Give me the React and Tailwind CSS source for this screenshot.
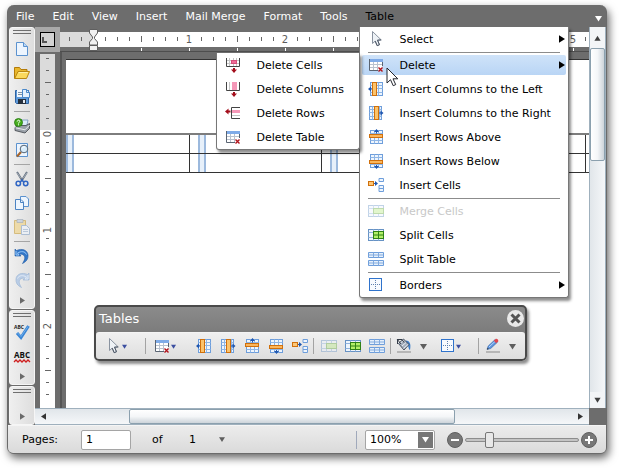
import { useState } from 'react';

function Svg({ children, className = 'w-4 h-4', box = '0 0 16 16' }) {
  return (
    <svg viewBox={box} className={`shrink-0 ${className}`} fill="none" aria-hidden="true">
      {children}
    </svg>
  );
}

function Caret({ dir = 'right', color = '#000', className = 'w-[6px] h-[8px]' }) {
  const points = {
    right: '0,0 7,4.5 0,9',
    left: '7,0 0,4.5 7,9',
    down: '0,2 7,2 3.5,7.5',
    up: '0,7.5 7,7.5 3.5,2',
  };
  return (
    <Svg box="0 0 7 9" className={className}>
      <polygon points={points[dir]} fill={color} />
    </Svg>
  );
}

/* ---------- table icons ---------- */

const CursorIcon = () => (
  <Svg>
    <path d="M4.5 .5v12l2.700-2.400 2 4.600 2.300-1-2-4.500 3.700-.3z" fill="#eef2f6" stroke="#8a93a0" />
    <path d="M7.200 10.100l2 4.600 2.300-1-2-4.500 3.700-.3" stroke="#4d5766" />
  </Svg>
);

const DeleteTableIcon = () => (
  <Svg>
    <path d="M2 5h12v8H2z" fill="#fff" />
    <rect x="1" y="2" width="14" height="3" fill="#7fabe8" />
    <path d="M1 7.500h13M1 10.500h9M5.500 5v8M9.500 5v8" stroke="#b9c2cf" />
    <path d="M1.500 2v11.500H10M14.500 5v4" stroke="#5a6472" />
    <path d="M10.500 10.500l4 4M14.500 10.500l-4 4" stroke="#b0131b" strokeWidth="1.4" />
  </Svg>
);

const DeleteCellsIcon = () => (
  <Svg>
    <path d="M4.500 1v8M8.500 1v8M11.500 1v8M2 3.500h12M2 6.500h12" stroke="#c5c5c5" />
    <rect x="6.500" y="3.500" width="5" height="3" fill="#f06c98" stroke="#d4507a" />
    <path d="M1.500 1v8.500h13V1" stroke="#444" />
    <path d="M9 11v3" stroke="#a30d1b" strokeWidth="2" />
    <path d="M6 12.500h6L9 16z" fill="#a30d1b" />
  </Svg>
);

const DeleteColumnsIcon = () => (
  <Svg>
    <path d="M4.500 1v8" stroke="#c5c5c5" />
    <rect x="7" y="1" width="5" height="8" fill="#f598b8" />
    <path d="M1.500 1v8.500h13V1" stroke="#444" />
    <path d="M9 11v3" stroke="#a30d1b" strokeWidth="2" />
    <path d="M6 12.500h6L9 16z" fill="#a30d1b" />
  </Svg>
);

const DeleteRowsIcon = () => (
  <Svg>
    <path d="M7 10.500h8" stroke="#c5c5c5" />
    <rect x="7" y="5" width="8" height="3" fill="#f598b8" />
    <path d="M15 2.500H6.500v11H15" stroke="#444" />
    <path d="M3 6.500h2.500" stroke="#a30d1b" strokeWidth="2" />
    <path d="M3.500 3.500v6L0 6.500z" fill="#a30d1b" />
  </Svg>
);

const BlueGrid = () => (
  <>
    <rect x="2.500" y="1.500" width="12" height="13" fill="#eef5fd" stroke="#6e9edb" />
    <path d="M2.500 4.500h12M2.500 7.500h12M2.500 11.500h12M6.500 1.500v13M10.500 1.500v13" stroke="#8fb6e6" />
  </>
);

const InsertLeftIcon = () => (
  <Svg>
    <BlueGrid />
    <rect x="4.500" y="1.500" width="4" height="13" fill="#fbc36c" stroke="#d0700c" />
    <path d="M4 8H2" stroke="#1f57b0" />
    <path d="M3 5.500v5L0 8z" fill="#1f57b0" />
  </Svg>
);

const InsertRightIcon = () => (
  <Svg>
    <rect x="1.500" y="1.500" width="12" height="13" fill="#eef5fd" stroke="#6e9edb" />
    <path d="M1.500 4.500h12M1.500 7.500h12M1.500 11.500h12M4.500 1.500v13M11.500 1.500v13" stroke="#8fb6e6" />
    <rect x="6.500" y="1.500" width="4" height="13" fill="#fbc36c" stroke="#d0700c" />
    <path d="M11 8h3" stroke="#1f57b0" />
    <path d="M12.500 5.500v5L15.500 8z" fill="#1f57b0" />
  </Svg>
);

const InsertAboveIcon = () => (
  <Svg>
    <BlueGrid />
    <rect x="1.500" y="5.500" width="13" height="3" fill="#fbb65c" stroke="#d0700c" />
    <path d="M8.500 4.500V2" stroke="#1f57b0" />
    <path d="M6 3h5L8.500 0z" fill="#1f57b0" />
  </Svg>
);

const InsertBelowIcon = () => (
  <Svg>
    <BlueGrid />
    <rect x="1.500" y="7.500" width="13" height="3" fill="#fbb65c" stroke="#d0700c" />
    <path d="M8.500 12v2" stroke="#1f57b0" />
    <path d="M6 13h5l-2.500 3z" fill="#1f57b0" />
  </Svg>
);

const InsertCellsIcon = () => (
  <Svg>
    <rect x=".5" y="4.500" width="5" height="4" fill="#fcc778" stroke="#d0700c" />
    <path d="M6 6.500h3" stroke="#1f57b0" />
    <path d="M7 4l3 2.500L7 9z" fill="#1f57b0" />
    <path d="M11 1.500h4.500v3H11zM11 8.500h4.500v3H11zM11 11.500h4.500v3H11z" fill="#eef5fd" stroke="#6e9edb" />
  </Svg>
);

const MergeCellsIcon = () => (
  <Svg className="w-4 h-4 opacity-40">
    <rect x=".5" y="2.500" width="15" height="11" fill="#eef5fd" stroke="#6792c4" />
    <path d="M.5 5.500h15M.5 10.500h15M5.500 2.500v11M10.500 2.500v11" stroke="#8fb2dd" />
    <rect x="5.500" y="5.500" width="10" height="5" fill="#b9ea84" stroke="#5fa536" />
  </Svg>
);

const SplitCellsIcon = () => (
  <Svg>
    <rect x=".5" y="2.500" width="15" height="11" fill="#eef5fd" stroke="#6792c4" />
    <path d="M.5 5.500h15M.5 10.500h15M5.500 2.500v11M10.500 2.500v11" stroke="#8fb2dd" />
    <rect x="5.500" y="4.500" width="10" height="7" fill="#b2ef68" stroke="#2f8216" />
    <path d="M5.500 8h10M10.500 4.500v7" stroke="#2f8216" />
  </Svg>
);

const SplitTableIcon = () => (
  <Svg>
    <path d="M.5 1.500h15v5H.5zM.5 9.500h15v5H.5z" fill="#e6f0fb" stroke="#6e9edb" />
    <path d="M.5 4h15M.5 12h15M5.500 1.500v5M10.500 1.500v5M5.500 9.500v5M10.500 9.500v5" stroke="#82abdf" />
  </Svg>
);

const BordersIcon = () => (
  <Svg>
    <rect x="1.500" y="1.500" width="12" height="12" fill="#f7fafe" stroke="#2f73cc" />
    <path d="M7.500 3v10M3 7.500h10" stroke="#5d7fae" strokeDasharray="1 1" />
  </Svg>
);

const BucketIcon = () => (
  <Svg>
    <path d="M10 2.500c3 .2 5.500 2.500 4 9.500-2-1-1-5-4-7z" fill="#3c7fcb" />
    <path d="M2.500 5.500L7.500 1l5.500 5.500-5 5.500z" fill="#a4afbd" stroke="#4b5563" />
    <path d="M4 5.500L7.700 2.300M6 8l4-3.500M7.500 10.500l4.500-4" stroke="#e8edf3" />
    <path d="M1 1l4 5M1 1.500h5l2 3M1.500 1v5" stroke="#333b47" />
    <rect x="1" y="13" width="14" height="2" fill="#b6b6b6" />
  </Svg>
);

const PencilIcon = () => (
  <Svg>
    <path d="M2 11.500l1.200-3.500 7-6.500 2.500 2.500-7 6.500z" fill="#5b93dd" stroke="#3465a8" strokeWidth=".6" />
    <path d="M4 9l6.500-6" stroke="#b8d6fb" />
    <path d="M8.800 2.800L10.700 1c1.200-.6 3 1 2.500 2.300l-2 2z" fill="#e2474d" />
    <path d="M2 11.500l.6-1.800 1.300 1.200z" fill="#333" />
    <rect x="1" y="13" width="14" height="2" fill="#b6b6b6" />
  </Svg>
);

/* ---------- main toolbar icons ---------- */

const NewIcon = () => (
  <Svg>
    <path d="M2.500 1.500h7l4 4v9h-11z" fill="#edf5fe" stroke="#5b92cf" />
    <path d="M9.500 1.500v4h4" fill="#bcd8f5" stroke="#5b92cf" />
  </Svg>
);

const OpenIcon = () => (
  <Svg>
    <path d="M.5 13.500v-11h5l1.500 2h6v3" fill="#e9b72c" stroke="#b37b0a" />
    <path d="M.7 13.500L4 6.500h11.500l-3 7z" fill="#fbd95c" stroke="#b98611" />
    <path d="M4.800 7.500h9" stroke="#fff1a8" />
  </Svg>
);

const SaveIcon = () => (
  <Svg>
    <path d="M1.500 1.500h13v13h-12l-1-1z" fill="#5f9ad9" stroke="#2d62a3" />
    <rect x="4" y="10" width="8" height="5" fill="#26303d" />
    <rect x="9" y="11" width="2" height="3" fill="#e5eaf0" />
    <rect x="3" y="1" width="6" height="7" fill="#f4f8fc" />
    <path d="M4 3.500h4M4 5.500h4" stroke="#7d92a8" />
    <path d="M8.500.5h4l3 3v5h-7z" fill="#e5f1fd" stroke="#4b88c9" />
    <path d="M12.500.5v3h3" stroke="#4b88c9" />
  </Svg>
);

const PrintIcon = () => (
  <Svg>
    <path d="M7 2h7l-1.500 7H5z" fill="#dcebfa" stroke="#6f93b8" strokeWidth=".8" />
    <path d="M1 9.500l3-2h8l3.500-2v5L11 15 1 12.500z" fill="#9aa1a9" stroke="#3d4349" strokeWidth=".8" />
    <path d="M1.500 9.800l9.500 2 4.500-4.600" stroke="#e8ebee" />
    <circle cx="4.500" cy="4.500" r="4" fill="#46ad1c" stroke="#20750b" strokeWidth=".8" />
    <path d="M3.200 3.500C3.500 1.500 6.300 2 5.700 3.800c-.3.700-1.200.7-1.200 1.700M4.500 6.300v1" stroke="#fff" />
  </Svg>
);

const PreviewIcon = () => (
  <Svg>
    <path d="M2.500 1.500h11v13h-11z" fill="#edf5fe" stroke="#5b92cf" />
    <path d="M7 10l-4 4.500" stroke="#a5652d" strokeWidth="2.200" />
    <circle cx="10" cy="7" r="3.800" fill="#d7ecfb" stroke="#566575" />
    <path d="M8 6.500c.4-1.500 2-1.900 3-1.400" stroke="#fff" />
  </Svg>
);

const CutIcon = () => (
  <Svg>
    <path d="M3 1l5.500 9M13 1l-5.500 9" stroke="#626e7d" strokeWidth="1.900" />
    <path d="M3 1.500l4 6M13 1.500L9 7.500" stroke="#cdd5de" strokeWidth=".6" />
    <circle cx="4.300" cy="12.500" r="2.200" stroke="#2f65c4" strokeWidth="1.500" />
    <circle cx="11.700" cy="12.500" r="2.200" stroke="#2f65c4" strokeWidth="1.500" />
    <path d="M6 11.500l2-2.500 2 2.500" stroke="#2f65c4" strokeWidth="1.500" />
  </Svg>
);

const CopyIcon = () => (
  <Svg>
    <path d="M6.500 1.500h5.500l2.500 2.500v7.500h-8z" fill="#edf5fe" stroke="#5b92cf" />
    <path d="M1.500 4.500H7L9.500 7v7.500h-8z" fill="#edf5fe" stroke="#4b83c3" />
    <path d="M6.500 4.500v3h3" stroke="#4b83c3" />
  </Svg>
);

const PasteIcon = () => (
  <Svg className="w-4 h-4 opacity-70">
    <path d="M.5 1.500h11v13H.5z" fill="#f0d58e" stroke="#cda94f" />
    <path d="M3 .5h6v3H3z" fill="#c3ccd8" stroke="#8b99aa" strokeWidth=".7" />
    <path d="M7.500 6.500h5l3 3v6h-8z" fill="#eef4fb" stroke="#96aecb" />
    <path d="M9 10.500h5M9 12.500h5" stroke="#a9bdd6" />
  </Svg>
);

const UndoIcon = () => (
  <Svg>
    <path d="M1 1l1.500 1.500C8 0 13.500 2 14 7c.3 4-1.500 6.500-5.500 8.500C11 12 11.300 9 10 7.500 8.800 6 7 6 5.500 6.300L7 8H1z" fill="#3378c9" stroke="#1c57a3" strokeWidth=".6" />
    <path d="M2 3v4h3L3.500 5C7 3 11 3 12.500 6.500" stroke="#9ccafa" />
  </Svg>
);

const RedoIcon = () => (
  <Svg>
    <path d="M15 1l-1.500 1.500C8 0 2.500 2 2 7c-.3 4 1.500 6.500 5.500 8.500C5 12 4.700 9 6 7.500 7.200 6 9 6 10.500 6.300L9 8h6z" fill="#bacde6" stroke="#9fb7d6" strokeWidth=".7" />
    <path d="M14 3v4h-3l1.500-2C9 3 5 3 3.500 6.500" stroke="#e0eaf6" />
  </Svg>
);

const SpellIcon = () => (
  <Svg className="h-4 w-4 overflow-visible">
    <text x="0" y="5" fontSize="5" fontWeight="bold" fontFamily="Open Sans, sans-serif" fill="#222">ABC</text>
    <path d="M3 9l4 4.500L14.500 2" stroke="#3a86d6" strokeWidth="3" />
    <path d="M3.500 9L7 12.500 14 2.500" stroke="#7db7ee" strokeWidth=".8" />
  </Svg>
);

const SpellLiveIcon = () => (
  <Svg className="h-4 w-4 overflow-visible">
    <text x="8" y="10" fontSize="8" fontWeight="bold" textAnchor="middle" fontFamily="Open Sans, sans-serif" fill="#111">ABC</text>
    <path d="M0 14l2-2 2 2 2-2 2 2 2-2 2 2 2-2 2 2" stroke="#cf1f1f" strokeWidth="1.300" />
  </Svg>
);

/* ---------- menus ---------- */

const menuNames = ['File', 'Edit', 'View', 'Insert', 'Mail Merge', 'Format', 'Tools'];

const deleteItems = [
  { label: 'Delete Cells', icon: DeleteCellsIcon },
  { label: 'Delete Columns', icon: DeleteColumnsIcon },
  { label: 'Delete Rows', icon: DeleteRowsIcon },
  { label: 'Delete Table', icon: DeleteTableIcon },
];

const tableItems = [
  { label: 'Select', icon: CursorIcon, arrow: true },
  null,
  { label: 'Delete', icon: DeleteTableIcon, arrow: true, items: deleteItems },
  { label: 'Insert Columns to the Left', icon: InsertLeftIcon },
  { label: 'Insert Columns to the Right', icon: InsertRightIcon },
  { label: 'Insert Rows Above', icon: InsertAboveIcon },
  { label: 'Insert Rows Below', icon: InsertBelowIcon },
  { label: 'Insert Cells', icon: InsertCellsIcon },
  null,
  { label: 'Merge Cells', icon: MergeCellsIcon, disabled: true },
  { label: 'Split Cells', icon: SplitCellsIcon },
  { label: 'Split Table', icon: SplitTableIcon },
  null,
  { label: 'Borders', icon: BordersIcon, arrow: true },
];

function MenuList({ items, className }) {
  return (
    <ul className={`absolute rounded-b-[3px] border border-t-0 border-[#777] bg-white text-black shadow-[2px_3px_3px_rgba(0,0,0,0.45)] ${className}`}>
      {items.map((item, i) => {
        if (!item) {
          return (
            <li key={i} className="flex h-0.5 items-end px-2">
              <hr className="w-full border-[#8c8c8c]" />
            </li>
          );
        }
        const Icon = item.icon;
        return (
          <li key={item.label} className="relative h-6 px-0.5 py-[2px]">
            <button
              type="button"
              disabled={item.disabled}
              className={`flex h-full w-full items-center rounded-[2px] pl-[6px] pr-px text-left whitespace-nowrap disabled:text-[#c8c8c8] ${
                item.items ? 'bg-linear-to-b from-[#cfe3f9] to-[#b9d5f5]' : ''
              }`}
            >
              <Icon />
              <span className="ml-[15px] flex-1 pt-px">{item.label}</span>
              {item.arrow && <Caret />}
            </button>
            {item.items && (
              <>
                <MenuList items={item.items} className="right-full top-0 w-36 border-t" />
                <Svg box="0 0 13 20" className="absolute left-[26px] top-[14px] h-5 w-[13px]">
                  <path d="M1 1v15l3.500-3.300 2.700 6 2.500-1.100L7 11.800h4.800z" fill="#fff" stroke="#23262e" />
                </Svg>
              </>
            )}
          </li>
        );
      })}
    </ul>
  );
}

function MenuBar() {
  return (
    <nav className="relative z-20 flex h-[22px] shrink-0 items-center gap-[18px] pl-2 pr-1 pt-px text-white">
      {menuNames.map((name) => (
        <button key={name} type="button" className="whitespace-nowrap">{name}</button>
      ))}
      <div className="relative h-full">
        <button type="button" className="h-full text-black">Table</button>
        <MenuList items={tableItems} className="-left-1.5 top-full w-[210px]" />
      </div>
      <button type="button" aria-label="More" className="ml-auto pt-1">
        <Caret dir="down" color="#fff" className="h-[9px] w-[7px]" />
      </button>
    </nav>
  );
}

/* ---------- side toolbar ---------- */

const sideGroups = [
  [
    ['New', NewIcon], ['Open', OpenIcon], ['Save', SaveIcon], null,
    ['Print', PrintIcon], ['Preview', PreviewIcon], null,
    ['Cut', CutIcon], ['Copy', CopyIcon], ['Paste', PasteIcon], null,
    ['Undo', UndoIcon], ['Redo', RedoIcon],
  ],
  [['Spelling', SpellIcon], ['Spell as you type', SpellLiveIcon]],
  [],
];

function SideToolbar() {
  return (
    <aside className="flex w-[26px] shrink-0 flex-col gap-px">
      {sideGroups.map((group, g) => (
        <div
          key={g}
          className="flex flex-col items-center rounded-[3px] border border-[#f6f6f6] bg-linear-to-r from-[#efefef] to-[#dedede] last:flex-1"
        >
          <div className="mt-[2px] mb-[3px] h-[4px] w-[18px] border-y border-[#6f6f6f]" />
          {group.map((item, i) => {
            if (!item) return <hr key={i} className="my-[2px] w-4 border-[#a5a5a5]" />;
            const [label, Icon] = item;
            return (
              <button key={label} type="button" aria-label={label} className="flex h-6 w-6 items-center justify-center">
                <Icon />
              </button>
            );
          })}
          <button type="button" aria-label="More tools" className="mt-auto flex h-4 w-6 items-center justify-center">
            <Caret color="#6a6a6a" className="h-[7px] w-[5px]" />
          </button>
        </div>
      ))}
    </aside>
  );
}

/* ---------- rulers ---------- */

const INCH = 96;
const range = (count) => Array.from({ length: count }, (_, i) => i + 1);
const topMarks = range(41);
const sideMarks = range(22);

function TopRuler() {
  return (
    <div className="h-[25px] min-w-0 flex-1 overflow-hidden border-b border-[#4e4e4e]">
      <svg width="1600" height="25" className="max-w-none" aria-hidden="true">
        <rect x="0" y="5" width="1600" height="15" fill="#fff" />
        <rect x="0" y="5" width="33" height="15" fill="#dbdbdb" />
        <path d="M9.500 10v4M21.500 10v4" stroke="#666" />
        {topMarks.map((n) => {
          const x = 33 + (n * INCH) / 8;
          if (n % 8 === 0) {
            return <text key={n} x={x} y="16" fontSize="10" textAnchor="middle" fill="#5c5c5c">{n / 8}</text>;
          }
          const tall = n % 4 === 0;
          return <path key={n} d={`M${x + 0.5} ${tall ? 9 : 10}v${tall ? 6 : 4}`} stroke="#666" />;
        })}
        {topMarks.filter((n) => n % 4 === 0).map((n) => (
          <path key={n} d={`M${33.5 + n * 12} 21v3`} stroke="#fff" />
        ))}
        <path d="M29.500 2.500h8v3.500L34.500 10v1.500l3 3.500v3h-8v-3l3-3.500V10l-3-4zM29.500 18.500h8v5h-8z" fill="#f1f1f1" stroke="#5f5f5f" />
      </svg>
    </div>
  );
}

function SideRuler() {
  return (
    <div className="w-[25px] shrink-0 overflow-hidden pl-[5px] pt-[2px]">
      <svg width="15" height="1600" className="max-w-none" aria-hidden="true">
        <rect width="15" height="1600" fill="#fff" />
        <rect width="15" height="76" fill="#dbdbdb" />
        {[4, 16, 28, 40, 52, 64].map((y) => (
          <path key={y} d={y === 28 ? 'M5 28.500h6' : `M6 ${y + 0.5}h3`} stroke="#666" />
        ))}
        <text transform="translate(11 80) rotate(-90)" fontSize="10" textAnchor="middle" fill="#5c5c5c">0</text>
        {sideMarks.map((n) => {
          const y = 76 + n * 12;
          if (n % 8 === 0) {
            return (
              <text key={n} transform={`translate(11 ${y + 4}) rotate(-90)`} fontSize="10" textAnchor="middle" fill="#5c5c5c">
                {n / 8}
              </text>
            );
          }
          return <path key={n} d={n % 4 === 0 ? `M5 ${y + 0.5}h6` : `M6 ${y + 0.5}h3`} stroke="#666" />;
        })}
      </svg>
    </div>
  );
}

/* ---------- document ---------- */

function DocumentTable() {
  return (
    <div className="overflow-hidden pt-[73px]">
      <table className="-ml-[9px] w-[661px] max-w-none table-fixed border-collapse border-t-2 border-[#7d7d7d]">
        <tbody>
          {[0, 1].map((r) => (
            <tr key={r}>
              {[0, 1, 2, 3, 4].map((c) => (
                <td key={c} className={`h-[19px] border border-[#333] p-0 pl-2 ${r === 0 ? 'border-t-0' : ''}`}>
                  <div className="h-[18px] w-2 border-x-2 border-[#9cb9dd] bg-[#e7f0fa]" />
                </td>
              ))}
            </tr>
          ))}
        </tbody>
      </table>
    </div>
  );
}

function ToolButton({ label, icon: Icon, caret, className = 'w-6 justify-center' }) {
  return (
    <button type="button" aria-label={label} className={`flex h-6 shrink-0 items-center ${className}`}>
      <Icon />
      {caret === 'small' && <Caret dir="down" color="#3c4fa0" className="h-[7px] w-[5px]" />}
      {caret === 'big' && <Caret dir="down" color="#5e5e5e" className="h-[9px] w-[7px]" />}
    </button>
  );
}

const Divider = ({ className = '' }) => <div className={`h-4 w-px shrink-0 bg-[#a3a3a3] ${className}`} />;

function TablesPalette() {
  return (
    <section
      aria-label="Tables"
      className="absolute left-8 top-[253px] w-[433px] rounded-[5px] border-2 border-[#4a4a4a] bg-linear-to-b from-[#8b8b8b] to-[#6c6c6c] shadow-[2px_3px_3px_rgba(0,0,0,0.45)]"
    >
      <header className="flex h-[25px] items-center justify-between pl-[3px] pr-px pb-0.5 text-white">
        <h2 className="text-[13px]">Tables</h2>
        <button type="button" aria-label="Close">
          <Svg className="h-[17px] w-[17px]" box="0 0 17 17">
            <circle cx="8.500" cy="8.500" r="8.500" fill="#e9e9e9" />
            <path d="M4.500 4.500l8 8M12.500 4.500l-8 8" stroke="#555" strokeWidth="3" />
          </Svg>
        </button>
      </header>
      <div className="flex h-[27px] items-center rounded-[3px] border-t border-[#f4f4f4] bg-linear-to-b from-[#f0f0f0] to-[#dedede] pl-[9px]">
        <ToolButton label="Select" icon={CursorIcon} caret="small" className="w-10 gap-px" />
        <Divider className="mr-2" />
        <ToolButton label="Delete" icon={DeleteTableIcon} caret="small" className="w-[38px] gap-px" />
        <ToolButton label="Insert columns to the left" icon={InsertLeftIcon} />
        <ToolButton label="Insert columns to the right" icon={InsertRightIcon} />
        <ToolButton label="Insert rows above" icon={InsertAboveIcon} />
        <ToolButton label="Insert rows below" icon={InsertBelowIcon} />
        <ToolButton label="Insert cells" icon={InsertCellsIcon} />
        <Divider className="ml-px mr-[3px]" />
        <ToolButton label="Merge cells" icon={MergeCellsIcon} />
        <ToolButton label="Split cells" icon={SplitCellsIcon} />
        <ToolButton label="Split table" icon={SplitTableIcon} />
        <Divider className="ml-px mr-[5px]" />
        <ToolButton label="Fill" icon={BucketIcon} caret="big" className="w-11 gap-2" />
        <ToolButton label="Borders" icon={BordersIcon} caret="small" className="w-[38px]" />
        <Divider className="mr-[6px]" />
        <ToolButton label="Line color" icon={PencilIcon} caret="big" className="gap-2" />
      </div>
    </section>
  );
}

function VerticalScrollbar() {
  return (
    <div className="flex w-[17px] shrink-0 flex-col items-center border-x border-[#9fb0bd] bg-linear-to-r from-[#e1e6ea] to-[#f5f7f9]">
      <button type="button" aria-label="Scroll up" className="flex h-[21px] w-full items-center justify-center bg-[#f3f5f7]">
        <Caret dir="up" color="#3f3f3f" className="h-[8px] w-[7px]" />
      </button>
      <div className="h-[113px] w-[15px] rounded-[2px] border border-[#8ba0ae] bg-linear-to-r from-white via-[#f4f6f8] to-[#cdd4da]" />
      <button type="button" aria-label="Scroll down" className="mt-auto flex h-4 w-full items-center justify-center bg-[#f3f5f7]">
        <Caret dir="down" color="#3f3f3f" className="h-[8px] w-[7px]" />
      </button>
    </div>
  );
}

function HorizontalScrollbar() {
  return (
    <div className="flex h-[17px] shrink-0 pr-[17px]">
      <div className="flex flex-1 items-center border-y border-[#9fb0bd] bg-linear-to-b from-[#e1e6ea] to-[#f5f7f9]">
        <button type="button" aria-label="Scroll left" className="flex h-full w-4 items-center justify-center">
          <Caret dir="left" color="#333" className="h-[7px] w-[5px]" />
        </button>
        <div className="ml-[14%] mr-[21%] h-[15px] flex-1 rounded-[2px] border border-[#8ba0ae] bg-linear-to-b from-white via-[#f4f6f8] to-[#cdd4da]" />
        <button type="button" aria-label="Scroll right" className="flex h-full w-[18px] items-center justify-center">
          <Caret color="#333" className="h-[7px] w-[5px]" />
        </button>
      </div>
    </div>
  );
}

/* ---------- status bar ---------- */

function ZoomButton({ label, d }) {
  return (
    <button type="button" aria-label={label} className="shrink-0">
      <Svg>
        <circle cx="8" cy="8" r="7.500" fill="#777" stroke="#606060" />
        <path d={d} stroke="#fff" strokeWidth="2" />
      </Svg>
    </button>
  );
}

function StatusBar() {
  const [page, setPage] = useState('1');
  const [zoom, setZoom] = useState(18);

  return (
    <footer className="flex h-7 shrink-0 items-center rounded-b-[5px] border-t border-[#f5f5f5] bg-linear-to-b from-[#ececec] to-[#dadada] pl-[14px] pr-[9px] text-black">
      <label htmlFor="page" className="w-[59px] shrink-0">Pages:</label>
      <input
        id="page"
        value={page}
        onChange={(e) => setPage(e.target.value)}
        className="h-5 w-[50px] shrink-0 rounded-[2px] border border-[#a5a5a5] bg-white px-1"
      />
      <span className="ml-[21px] w-[37px] shrink-0">of</span>
      <span className="w-[30px] shrink-0">1</span>
      <Caret dir="down" color="#5e5e5e" className="h-[9px] w-[6px]" />
      <div className="ml-auto h-[18px] w-px shrink-0 bg-[#a0a9bb]" />
      <div className="relative ml-2 h-5 w-[70px] shrink-0">
        <select aria-label="Zoom level" className="h-full w-full appearance-none rounded-[2px] border border-[#a5a5a5] bg-white pl-1">
          <option>100%</option>
        </select>
        <span className="pointer-events-none absolute right-0.5 top-0.5 flex h-4 w-[15px] items-center justify-center bg-[#777]">
          <Caret dir="down" color="#fff" className="h-[9px] w-[7px]" />
        </span>
      </div>
      <div className="ml-3 flex shrink-0 items-center gap-0.5">
        <ZoomButton label="Zoom out" d="M4 8h8" />
        <input
          type="range"
          aria-label="Zoom"
          value={zoom}
          onChange={(e) => setZoom(Number(e.target.value))}
          className="h-1 w-[114px] appearance-none rounded-full border border-[#8d8d8d] bg-[#c4c4c4] [&::-webkit-slider-thumb]:h-4 [&::-webkit-slider-thumb]:w-[9px] [&::-webkit-slider-thumb]:appearance-none [&::-webkit-slider-thumb]:rounded-[2px] [&::-webkit-slider-thumb]:border [&::-webkit-slider-thumb]:border-[#777] [&::-webkit-slider-thumb]:bg-[#e8e8e8]"
        />
        <ZoomButton label="Zoom in" d="M4 8h8M8 4v8" />
      </div>
    </footer>
  );
}

export default function App() {
  return (
    <div className="flex h-screen flex-col bg-white pb-4 pl-[7px] pr-[13px] pt-[5px] font-['DejaVu_Sans',Verdana,sans-serif] text-[11px] leading-4">
      <div className="flex min-h-0 flex-1 flex-col rounded-[7px] border border-[#6b6b6b] border-t-0 bg-[#6d6d6d] shadow-[2px_4px_8px_rgba(0,0,0,0.6)]">
        <MenuBar />
        <div className="flex min-h-0 flex-1 pl-px">
          <SideToolbar />
          <main className="flex min-w-0 flex-1 flex-col">
            <div className="flex min-h-0 flex-1">
              <div className="flex min-w-0 flex-1 flex-col">
                <div className="flex shrink-0">
                  <div className="flex h-[25px] w-[25px] shrink-0 items-center justify-center bg-[#a9a9a9]">
                    <Svg className="h-[15px] w-[15px]" box="0 0 15 15">
                      <rect x=".5" y=".5" width="14" height="14" fill="#d3d3d3" stroke="#000" />
                      <path d="M3 5v5h4" stroke="#555" strokeWidth="2" />
                    </Svg>
                  </div>
                  <TopRuler />
                </div>
                <div className="flex min-h-0 flex-1">
                  <SideRuler />
                  <div className="relative min-w-0 flex-1 border-l-2 border-[#555] pl-1 pt-[7px]">
                    <div className="h-full overflow-hidden border-t border-[#333] bg-white">
                      <DocumentTable />
                    </div>
                    <TablesPalette />
                  </div>
                </div>
              </div>
              <VerticalScrollbar />
            </div>
            <HorizontalScrollbar />
          </main>
        </div>
        <StatusBar />
      </div>
    </div>
  );
}
